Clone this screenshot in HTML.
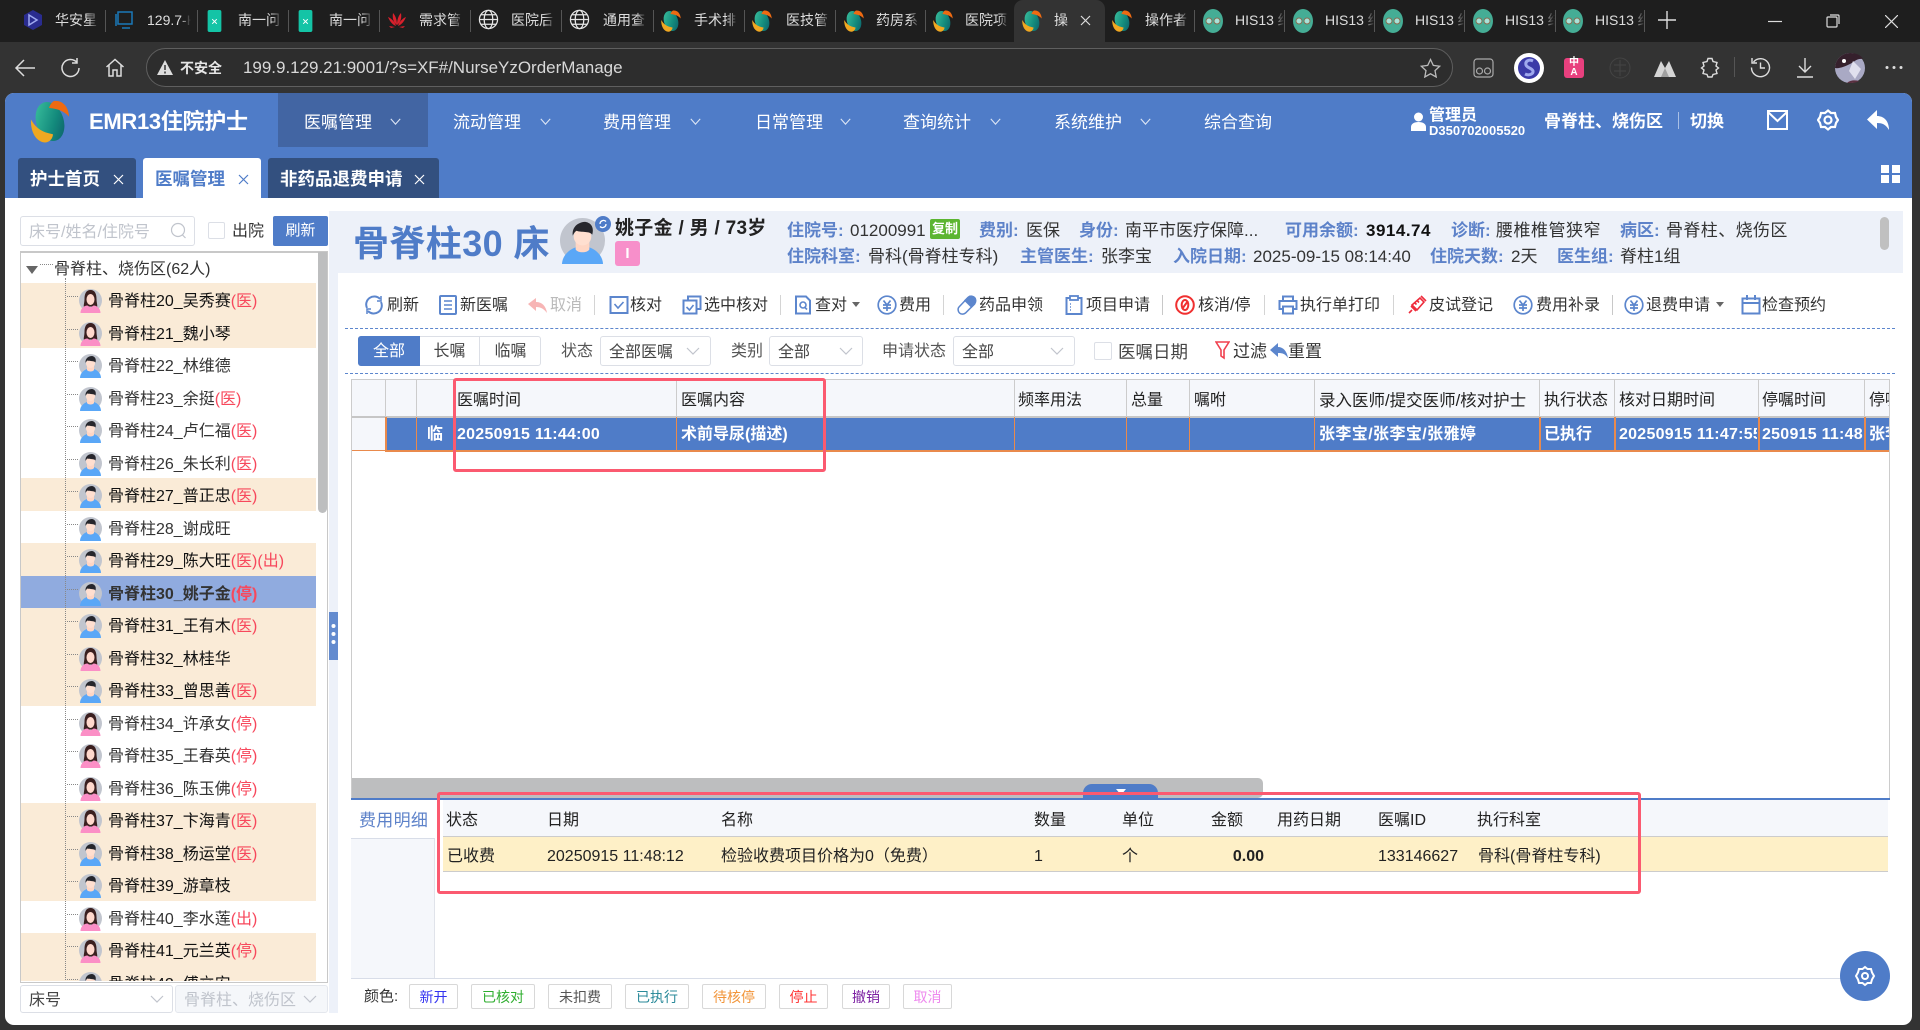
<!DOCTYPE html>
<html lang="zh"><head><meta charset="utf-8"><title>EMR13住院护士</title>
<style>
*{box-sizing:border-box}
html,body{margin:0;padding:0;width:1920px;height:1030px;overflow:hidden;background:#333;font-family:"Liberation Sans","Noto Sans CJK SC",sans-serif;font-size:16px;color:#333}
.a{position:absolute}
.t{position:absolute;white-space:nowrap;height:24px;line-height:24px;margin-top:1px}
.b{font-weight:700}
.w{color:#fff}
.lb{color:#5d82c9;font-weight:700;font-size:17px}
.v{font-size:17px}
.tt{position:absolute;top:8px;height:24px;line-height:24px;font-size:14px;color:#ddd;white-space:nowrap;overflow:hidden;width:44px;-webkit-mask-image:linear-gradient(90deg,#000 75%,transparent)}
.sp{position:absolute;top:10px;width:1px;height:22px;background:#555}
.nav{position:absolute;top:111px;height:24px;line-height:24px;font-size:17px;color:#fff;white-space:nowrap}
.tab{position:absolute;top:158px;height:40px;background:#33507f;border-radius:3px 3px 0 0;color:#fff;font-weight:700;font-size:17.5px;line-height:42px;white-space:nowrap}
.tool{position:absolute;top:294px;height:24px;line-height:24px;font-size:16px;color:#333;white-space:nowrap}
.sep{position:absolute;top:295px;width:1px;height:20px;background:#d4d4d4}
.ic{position:absolute;top:295px;width:20px;height:20px;fill:none;stroke:#5c86cd;stroke-width:1.6}
.sel{position:absolute;top:336px;height:30px;border:1px solid #dcdfe6;border-radius:3px;background:#fff;line-height:30px;padding-left:8px;font-size:16px;white-space:nowrap;color:#444}
.ch{position:absolute;width:14px;height:8px;fill:none;stroke:#c0c4cc;stroke-width:1.2}
.cn{position:absolute;top:118px;width:11px;height:7px;fill:none;stroke:#dde6f5;stroke-width:1.4}
.th{position:absolute;top:389px;height:24px;line-height:24px;font-size:16px;white-space:nowrap;color:#222}
.tv{position:absolute;top:423px;height:24px;line-height:24px;font-size:16px;font-weight:700;color:#fff;white-space:nowrap;overflow:hidden}
.vl{position:absolute;top:379px;width:1px;height:38px;background:#ccc}
.ol{position:absolute;top:417px;width:2px;height:34px;background:#e98a4c}
.bh{position:absolute;top:809px;height:24px;line-height:24px;font-size:16px;white-space:nowrap;color:#222}
.bv{position:absolute;top:845px;height:24px;line-height:24px;font-size:16px;white-space:nowrap;color:#222}
.lg{position:absolute;top:984px;height:25px;line-height:25px;border:1px solid #d8d8d8;border-radius:2px;background:#fff;text-align:center;font-size:14px}
.red{position:absolute;border:3px solid #fb5a70;border-radius:3px;pointer-events:none}
#tree{position:absolute;left:21px;top:252px;width:306px;height:729px;overflow:hidden;padding-top:31px}
.r{position:relative;height:32.5px;width:295px;font-size:16px;line-height:37px;padding-left:87px;white-space:nowrap;color:#333}
.r.o{background:#faebd7;color:#111}
.r.s{background:#90abdf;font-weight:700;color:#333}
.r svg{position:absolute;left:58px;top:6px;width:23px;height:24px}
.r i{position:absolute;left:46px;top:13px;width:11px;border-top:1px dotted #888}
.r em{font-style:normal;color:#f7485c}
</style></head><body>
<svg width="0" height="0" style="position:absolute">
<defs>
<linearGradient id="g" x1="0" y1="0" x2="1" y2="1"><stop offset="0" stop-color="#3dc4a0"/><stop offset=".6" stop-color="#138a7c"/><stop offset="1" stop-color="#0c5a68"/></linearGradient>
<symbol id="logo" viewBox="0 0 40 44"><ellipse cx="20" cy="22" rx="14" ry="20.500" fill="url(#g)" transform="rotate(-18 20 22)"/><path d="M24 1C33 0 39 7 39.500 17 35 12 29 9 19 8 20 5 22 2 24 1Z" fill="#ee6a12"/><path d="M.5 20C5 28 11 33 23 35 23 39 20 43 15 43.500 6 43 0 33 .5 20Z" fill="#f0a821"/></symbol>
<symbol id="m" viewBox="0 0 23 24"><circle cx="11.5" cy="11.5" r="11.5" fill="#c1c5ce"/><path d="M1 24c0-5 4-8 7-9h7c3 1 7 4 7 9Z" fill="#5aa7f7"/><path d="M8 12h7v4c-1 2-6 2-7 0Z" fill="#ffd6c4"/><circle cx="11.5" cy="9.5" r="4.5" fill="#ffdfd0"/><path d="M6.500 9C6 4 10 2 13 2c3 .5 4.500 3 3.500 6.500C15 6.500 11 7.500 8.500 6.500 7.500 7 7 8 6.500 9Z" fill="#26262c"/></symbol>
<symbol id="f" viewBox="0 0 23 24"><circle cx="11.500" cy="11.500" r="11.500" fill="#c1c5ce"/><path d="M11.500 1C7 1 5.500 5 5.500 10c0 3-.8 5-.8 7.500h13.600c0-2.500-.8-4.500-.8-7.500 0-5-1.500-9-6-9Z" fill="#3a1f1f"/><ellipse cx="11.500" cy="10.500" rx="4" ry="5.500" fill="#ffd8cc"/><path d="M1.500 24c0-4 3-7.500 7-7.500l3 2 3-2c4 0 7 3.500 7 7.500Z" fill="#fb8fc6"/></symbol>
<symbol id="fav" viewBox="0 0 40 44"><ellipse cx="20" cy="22" rx="14" ry="20.500" fill="url(#g)" transform="rotate(-18 20 22)"/><path d="M24 1C33 0 39 7 39.500 17 35 12 29 9 19 8 20 5 22 2 24 1Z" fill="#ee6a12"/><path d="M.5 20C5 28 11 33 23 35 23 39 20 43 15 43.500 6 43 0 33 .5 20Z" fill="#f0a821"/></symbol>
<symbol id="his" viewBox="0 0 20 24"><ellipse cx="10" cy="12" rx="10" ry="12" fill="#45ad95"/><circle cx="6" cy="12" r="3" fill="#a7e3d8" stroke="#8a6a50" stroke-width=".9"/><circle cx="14" cy="12" r="3" fill="#a7e3d8" stroke="#8a6a50" stroke-width=".9"/></symbol>
<symbol id="globe" viewBox="0 0 22 22"><g fill="none" stroke="#e6e6e6" stroke-width="1.300"><circle cx="11" cy="11" r="9.500"/><ellipse cx="11" cy="11" rx="4.500" ry="9.500"/><path d="M1.500 11h19M3 6h16M3 16h16"/></g></symbol>
<symbol id="qi" viewBox="0 0 15 24"><rect width="15" height="24" rx="2" fill="#14c4a6"/><path d="M5 10l5 5M10 10l-5 5" stroke="#fff"/></symbol>
<symbol id="yen" viewBox="0 0 20 20"><circle cx="10" cy="10" r="8.800"/><path d="M6.500 5.500 10 10l3.500-4.500M6 10h8M6 13h8M10 10v6"/></symbol>
<symbol id="chev" viewBox="0 0 14 8"><path d="M1 1l6 6 6-6"/></symbol>
</defs></svg>

<!-- browser tab strip -->
<div class="a" style="left:0;top:0;width:1920px;height:42px;background:#1e1e1e"></div>
<div class="a" style="left:1014px;top:0;width:91px;height:42px;background:#333;border-radius:9px 9px 0 0"></div>
<svg class="a" style="left:23px;top:10px" width="20" height="20" viewBox="0 0 20 20"><path d="M10 0 19 5v10l-9 5-9-5V5Z" fill="#2a2c8f"/><path d="M6 5l8 5-8 5Z" fill="none" stroke="#9ea8f0" stroke-width="1.500"/></svg>
<svg class="a" style="left:114px;top:10px" width="20" height="20" viewBox="0 0 20 20" fill="none" stroke="#1a78b8" stroke-width="1.500"><rect x="4" y="2" width="14" height="12"/><path d="M2 4v12M8 18h8"/></svg>
<svg class="a" style="left:207px;top:10px" width="15" height="22"><use href="#qi"/></svg>
<svg class="a" style="left:298px;top:10px" width="15" height="22"><use href="#qi"/></svg>
<svg class="a" style="left:387px;top:10px" width="20" height="20" viewBox="0 0 20 20"><path d="M10 15C7 13 5 9 6 3c2 2 4 6 4 12ZM10 15c3-2 5-6 4-12-2 2-4 6-4 12ZM9 16C6 15 3 12 1 7c3 1 7 5 8 9ZM11 16c3-1 6-4 8-9-3 1-7 5-8 9ZM8 17l-6-1 2 2ZM12 17l6-1-2 2Z" fill="#d9202c"/></svg>
<svg class="a" style="left:478px;top:9px" width="21" height="21"><use href="#globe"/></svg>
<svg class="a" style="left:569px;top:9px" width="21" height="21"><use href="#globe"/></svg>
<svg class="a" style="left:661px;top:9px" width="20" height="24"><use href="#fav"/></svg>
<svg class="a" style="left:752px;top:9px" width="20" height="24"><use href="#fav"/></svg>
<svg class="a" style="left:844px;top:9px" width="20" height="24"><use href="#fav"/></svg>
<svg class="a" style="left:933px;top:9px" width="20" height="24"><use href="#fav"/></svg>
<svg class="a" style="left:1022px;top:9px" width="20" height="24"><use href="#fav"/></svg>
<svg class="a" style="left:1112px;top:9px" width="20" height="24"><use href="#fav"/></svg>
<svg class="a" style="left:1203px;top:9px" width="20" height="24"><use href="#his"/></svg>
<svg class="a" style="left:1293px;top:9px" width="20" height="24"><use href="#his"/></svg>
<svg class="a" style="left:1383px;top:9px" width="20" height="24"><use href="#his"/></svg>
<svg class="a" style="left:1473px;top:9px" width="20" height="24"><use href="#his"/></svg>
<svg class="a" style="left:1563px;top:9px" width="20" height="24"><use href="#his"/></svg>
<div class="tt" style="left:55px">华安星</div><div class="tt" style="left:147px">129.7-H</div><div class="tt" style="left:238px">南一问</div><div class="tt" style="left:329px">南一问</div><div class="tt" style="left:419px">需求管</div><div class="tt" style="left:511px">医院后</div><div class="tt" style="left:603px">通用查</div><div class="tt" style="left:694px">手术排</div><div class="tt" style="left:786px">医技管</div><div class="tt" style="left:876px">药房系</div><div class="tt" style="left:965px">医院项</div><div class="tt" style="left:1054px;width:16px;-webkit-mask-image:none">操</div><div class="tt" style="left:1145px">操作者</div><div class="tt" style="left:1235px;width:50px">HIS13 结</div><div class="tt" style="left:1325px;width:50px">HIS13 结</div><div class="tt" style="left:1415px;width:50px">HIS13 结</div><div class="tt" style="left:1505px;width:50px">HIS13 结</div><div class="tt" style="left:1595px;width:50px">HIS13 结</div>
<div class="sp" style="left:105px"></div><div class="sp" style="left:197px"></div><div class="sp" style="left:288px"></div><div class="sp" style="left:379px"></div><div class="sp" style="left:470px"></div><div class="sp" style="left:561px"></div><div class="sp" style="left:653px"></div><div class="sp" style="left:744px"></div><div class="sp" style="left:835px"></div><div class="sp" style="left:925px"></div><div class="sp" style="left:1194px"></div><div class="sp" style="left:1284px"></div><div class="sp" style="left:1374px"></div><div class="sp" style="left:1464px"></div><div class="sp" style="left:1555px"></div><div class="sp" style="left:1644px"></div>
<svg class="a" style="left:1080px;top:15px" width="11" height="11" stroke="#ddd" stroke-width="1.200"><path d="M1 1l9 9M10 1l-9 9"/></svg>
<svg class="a" style="left:1658px;top:11px" width="18" height="18" stroke="#ddd" stroke-width="1.400"><path d="M9 0v18M0 9h18"/></svg>
<svg class="a" style="left:1768px;top:15px" width="14" height="12" stroke="#ddd" stroke-width="1.200"><path d="M0 6.500h14"/></svg>
<svg class="a" style="left:1826px;top:14px" width="14" height="14" fill="none" stroke="#ddd" stroke-width="1.200"><rect x="1" y="3" width="10" height="10" rx="1"/><path d="M4 1h8a1 1 0 0 1 1 1v8"/></svg>
<svg class="a" style="left:1885px;top:15px" width="13" height="13" stroke="#ddd" stroke-width="1.200"><path d="M0 0l13 13M13 0 0 13"/></svg>

<!-- browser toolbar -->
<div class="a" style="left:0;top:42px;width:1920px;height:51px;background:#333"></div>
<svg class="a" style="left:14px;top:58px" width="22" height="20" fill="none" stroke="#ddd" stroke-width="1.500"><path d="M21 10H2M10 2l-8 8 8 8"/></svg>
<svg class="a" style="left:60px;top:57px" width="21" height="21" fill="none" stroke="#ddd" stroke-width="1.500"><path d="M17 5.500A8.500 8.500 0 1 0 19 11M17 1v5h-5"/></svg>
<svg class="a" style="left:105px;top:58px" width="20" height="20" fill="none" stroke="#ddd" stroke-width="1.500"><path d="M1.500 9 10 1.500 18.500 9M4 7v11h4v-6h4v6h4V7"/></svg>
<div class="a" style="left:146px;top:48px;width:1307px;height:39px;border:1px solid #5f5f5f;border-radius:20px;background:#2d2d2d"></div>
<svg class="a" style="left:157px;top:60px" width="16" height="15"><path d="M8 0l8 15H0Z" fill="#ddd"/><path d="M8 5v5M8 11.500v2" stroke="#333" stroke-width="1.500"/></svg>
<div class="t" style="left:180px;top:56px;margin-top:0;font-size:14px;color:#e6e6e6;font-weight:700">不安全</div>
<div class="t" style="left:243px;top:56px;margin-top:0;font-size:17px;color:#d8d8d8;letter-spacing:-.02px">199.9.129.21:9001/?s=XF#/NurseYzOrderManage</div>
<svg class="a" style="left:1420px;top:58px" width="21" height="20" fill="none" stroke="#bbb" stroke-width="1.300"><path d="M10.500 1.500l2.800 5.900 6.400.8-4.700 4.400 1.200 6.400-5.700-3.200-5.700 3.200 1.200-6.400L1.300 8.200l6.400-.8Z"/></svg>
<svg class="a" style="left:1473px;top:58px" width="21" height="20" fill="none" stroke="#aaa" stroke-width="1.200"><rect x="1" y="1" width="19" height="18" rx="3"/><circle cx="6.500" cy="13" r="3"/><circle cx="14.500" cy="13" r="3"/></svg>
<svg class="a" style="left:1514px;top:53px" width="30" height="30" viewBox="0 0 30 30"><circle cx="15" cy="15" r="15" fill="#fff"/><circle cx="15" cy="15" r="11" fill="#3b3aa8"/><path d="M19 8c-4-2-8 0-7 4 1 3 6 3 7 6 .5 3-4 5-8 3" fill="none" stroke="#9fa8ee" stroke-width="3"/></svg>
<div class="a" style="left:1564px;top:58px;width:20px;height:20px;background:#e8407e;border-radius:3px;color:#fff;font-size:10px;line-height:10px;text-align:center;font-weight:700;padding-top:0">中<br>A</div>
<svg class="a" style="left:1609px;top:57px" width="22" height="22" fill="none" stroke="#444"><circle cx="11" cy="11" r="10"/><path d="M11 3v16M5 8h12M5 14h12"/></svg>
<svg class="a" style="left:1654px;top:59px" width="22" height="18"><path d="M0 18 7 2l4 7 4-7 7 16Z" fill="#d5d5d5"/><path d="M7 18 11 9l4 9Z" fill="#a0a0a0"/></svg>
<svg class="a" style="left:1700px;top:57px" width="20" height="21" fill="none" stroke="#ddd" stroke-width="1.400"><path d="M8 1.500h4l1 3 4 1-1 3.500 2.500 2-2.500 2 1 3.500-4 1-1 2.500H8l-1-2.500-4-1 1-3.500-2.500-2L4 9 3 5.500l4-1Z"/></svg>
<div class="a" style="left:1734px;top:57px;width:1px;height:20px;background:#555"></div>
<svg class="a" style="left:1750px;top:57px" width="21" height="21" fill="none" stroke="#ddd" stroke-width="1.400"><path d="M3.500 5A9 9 0 1 1 1.500 10.500M2 1v5h5M10.500 5.500V11h4.500"/></svg>
<svg class="a" style="left:1796px;top:58px" width="18" height="20" fill="none" stroke="#ddd" stroke-width="1.400"><path d="M9 0v14M3 8l6 6 6-6M1 19h16"/></svg>
<svg class="a" style="left:1835px;top:53px" width="30" height="30" viewBox="0 0 30 30"><circle cx="15" cy="15" r="15" fill="#a9a9c4"/><path d="M0 15A15 15 0 0 1 15 0c6 0 11 2 13 6-6-1-9 3-13 5S4 16 0 15Z" fill="#35202c"/><path d="M18 8l8 8-6 10-6-8Z" fill="#e0e0ee"/><path d="M12 30c3-3 8-3 12-2-3 2-6 2-12 2Z" fill="#5a3040"/><circle cx="9" cy="8" r="2" fill="#fff"/></svg>
<svg class="a" style="left:1884px;top:65px" width="20" height="5" fill="#ddd"><circle cx="3" cy="2.500" r="1.500"/><circle cx="10" cy="2.500" r="1.500"/><circle cx="17" cy="2.500" r="1.500"/></svg>

<!-- app -->
<div class="a" style="left:5px;top:93px;width:1907px;height:932px;background:#fff;border-radius:9px;overflow:hidden">
 <div class="a" style="left:0;top:0;width:1907px;height:105px;background:#4f7cc8"></div>
</div>
<div class="a" style="left:278px;top:93px;width:150px;height:54px;background:#4265a3"></div>
<svg class="a" style="left:30px;top:100px" width="40" height="43"><use href="#logo"/></svg>
<div class="t b w" style="left:89px;top:109px;font-size:22px;letter-spacing:-.3px">EMR13住院护士</div>
<div class="nav" style="left:304px">医嘱管理</div><div class="nav" style="left:453px">流动管理</div><div class="nav" style="left:603px">费用管理</div><div class="nav" style="left:755px">日常管理</div><div class="nav" style="left:903px">查询统计</div><div class="nav" style="left:1054px">系统维护</div><div class="nav" style="left:1204px">综合查询</div>
<svg class="cn" style="left:390px" viewBox="0 0 14 8" preserveAspectRatio="none"><path d="M1 1l6 6 6-6"/></svg><svg class="cn" style="left:540px" viewBox="0 0 14 8" preserveAspectRatio="none"><path d="M1 1l6 6 6-6"/></svg><svg class="cn" style="left:690px" viewBox="0 0 14 8" preserveAspectRatio="none"><path d="M1 1l6 6 6-6"/></svg><svg class="cn" style="left:840px" viewBox="0 0 14 8" preserveAspectRatio="none"><path d="M1 1l6 6 6-6"/></svg><svg class="cn" style="left:990px" viewBox="0 0 14 8" preserveAspectRatio="none"><path d="M1 1l6 6 6-6"/></svg><svg class="cn" style="left:1140px" viewBox="0 0 14 8" preserveAspectRatio="none"><path d="M1 1l6 6 6-6"/></svg>
<svg class="a" style="left:1411px;top:112px" width="15" height="19" fill="#fff"><circle cx="7.500" cy="5" r="4.500"/><path d="M0 19v-4c0-3 3-5 7.500-5S15 12 15 15v4Z"/></svg>
<div class="t b w" style="left:1429px;top:103px;font-size:16px">管理员</div>
<div class="t b w" style="left:1429px;top:118px;font-size:13px">D350702005520</div>
<div class="t b w" style="left:1544px;top:109px;font-size:17px">骨脊柱、烧伤区</div>
<div class="a" style="left:1678px;top:112px;width:1px;height:17px;background:#a9c0e6"></div>
<div class="t b w" style="left:1690px;top:109px;font-size:17px">切换</div>
<svg class="a" style="left:1767px;top:110px" width="21" height="20" fill="none" stroke="#fff" stroke-width="2"><rect x="1" y="1" width="19" height="18"/><path d="M1 2l9.500 9L20 2"/></svg>
<svg class="a" style="left:1817px;top:109px" width="22" height="22" fill="none" stroke="#fff" stroke-width="2.200"><path d="M11 1.500l3 2.500 4 0 1 4 2 3-2 3-1 4-4 0-3 2.500-3-2.500-4 0-1-4-2-3 2-3 1-4 4 0Z"/><circle cx="11" cy="11" r="3.500"/></svg>
<svg class="a" style="left:1867px;top:110px" width="22" height="20" fill="#fff"><path d="M10 0v6c7 0 12 5 12 14-3-5-6-7-12-7v6L0 9.500Z"/></svg>

<div class="tab" style="left:18px;width:118px;padding-left:12px">护士首页</div>
<div class="tab" style="left:143px;width:118px;padding-left:12px;background:#fff;color:#4f7cc8">医嘱管理</div>
<div class="tab" style="left:268px;width:171px;padding-left:12px">非药品退费申请</div>
<svg class="a" style="left:113px;top:174px" width="11" height="11" stroke="#fff" stroke-width="1.200"><path d="M1 1l9 9M10 1l-9 9"/></svg>
<svg class="a" style="left:238px;top:174px" width="11" height="11" stroke="#4f7cc8" stroke-width="1.200"><path d="M1 1l9 9M10 1l-9 9"/></svg>
<svg class="a" style="left:414px;top:174px" width="11" height="11" stroke="#fff" stroke-width="1.200"><path d="M1 1l9 9M10 1l-9 9"/></svg>
<svg class="a" style="left:1881px;top:165px" width="19" height="18" fill="#fff"><rect width="8" height="8"/><rect x="11" width="8" height="8"/><rect y="10" width="8" height="8"/><rect x="11" y="10" width="8" height="8"/></svg>

<!-- sidebar -->
<div class="a" style="left:20px;top:216px;width:175px;height:30px;border:1px solid #dcdfe6;border-radius:3px;background:#fff;color:#c0c4cc;font-size:16px;line-height:31px;padding-left:8px;white-space:nowrap">床号/姓名/住院号</div>
<svg class="a" style="left:170px;top:222px" width="17" height="18" fill="none" stroke="#c0c4cc" stroke-width="1.200"><circle cx="8" cy="8" r="6.500"/><path d="M12.500 13l3 3"/></svg>
<div class="a" style="left:208px;top:222px;width:17px;height:17px;border:1px solid #dcdfe6;border-radius:2px"></div>
<div class="t" style="left:232px;top:219px">出院</div>
<div class="a w" style="left:273px;top:216px;width:55px;height:30px;background:#4f7cc8;border-radius:2px;text-align:center;line-height:29px;font-size:15px">刷新</div>
<div class="a" style="left:20px;top:251px;width:308px;height:732px;border:1px solid #c8c8c8;border-top-width:2px"></div>
<div id="tree">
<div class="r o"><i></i><svg><use href="#f"/></svg>骨脊柱20_吴秀赛<em>(医)</em></div>
<div class="r o"><i></i><svg><use href="#f"/></svg>骨脊柱21_魏小琴</div>
<div class="r"><i></i><svg><use href="#m"/></svg>骨脊柱22_林维德</div>
<div class="r"><i></i><svg><use href="#m"/></svg>骨脊柱23_余挺<em>(医)</em></div>
<div class="r"><i></i><svg><use href="#m"/></svg>骨脊柱24_卢仁福<em>(医)</em></div>
<div class="r"><i></i><svg><use href="#m"/></svg>骨脊柱26_朱长利<em>(医)</em></div>
<div class="r o"><i></i><svg><use href="#m"/></svg>骨脊柱27_普正忠<em>(医)</em></div>
<div class="r"><i></i><svg><use href="#m"/></svg>骨脊柱28_谢成旺</div>
<div class="r o"><i></i><svg><use href="#m"/></svg>骨脊柱29_陈大旺<em>(医)(出)</em></div>
<div class="r s"><i></i><svg><use href="#m"/></svg>骨脊柱30_姚子金<em>(停)</em></div>
<div class="r o"><i></i><svg><use href="#m"/></svg>骨脊柱31_王有木<em>(医)</em></div>
<div class="r o"><i></i><svg><use href="#f"/></svg>骨脊柱32_林桂华</div>
<div class="r o"><i></i><svg><use href="#m"/></svg>骨脊柱33_曾思善<em>(医)</em></div>
<div class="r"><i></i><svg><use href="#f"/></svg>骨脊柱34_许承女<em>(停)</em></div>
<div class="r"><i></i><svg><use href="#f"/></svg>骨脊柱35_王春英<em>(停)</em></div>
<div class="r"><i></i><svg><use href="#f"/></svg>骨脊柱36_陈玉佛<em>(停)</em></div>
<div class="r o"><i></i><svg><use href="#f"/></svg>骨脊柱37_卞海青<em>(医)</em></div>
<div class="r o"><i></i><svg><use href="#m"/></svg>骨脊柱38_杨运堂<em>(医)</em></div>
<div class="r o"><i></i><svg><use href="#m"/></svg>骨脊柱39_游章枝</div>
<div class="r"><i></i><svg><use href="#f"/></svg>骨脊柱40_李水莲<em>(出)</em></div>
<div class="r o"><i></i><svg><use href="#f"/></svg>骨脊柱41_元兰英<em>(停)</em></div>
<div class="r o"><i></i><svg><use href="#m"/></svg>骨脊柱42_傅立安</div>
<div class="a" style="left:44px;top:26px;height:710px;border-left:1px dotted #888"></div>
<div class="a" style="left:5px;top:14px;width:0;height:0;border:6.500px solid transparent;border-top:8px solid #666;border-bottom:0"></div>
<div class="a" style="left:19px;top:12px;width:13px;border-top:1px dotted #888"></div>
<div class="t" style="left:33px;top:5px">骨脊柱、烧伤区(62人)</div>
<div class="a" style="left:297px;top:0;width:9px;height:261px;background:#bdbebf;border-radius:0 0 5px 5px"></div>
</div>
<div class="a" style="left:20px;top:985px;width:153px;height:28px;border:1px solid #dcdfe6;border-radius:3px;line-height:29px;padding-left:8px;color:#444;background:#fff">床号</div>
<div class="a" style="left:175px;top:985px;width:153px;height:28px;border:1px solid #e4e7ed;border-radius:3px;line-height:29px;padding-left:8px;color:#c0c4cc;background:#f5f7fa;white-space:nowrap;overflow:hidden">骨脊柱、烧伤区</div>
<svg class="ch" style="left:150px;top:995px"><use href="#chev"/></svg><svg class="ch" style="left:303px;top:995px;background:#f5f7fa"><use href="#chev"/></svg>
<div class="a" style="left:329px;top:211px;width:9px;height:802px;background:#edf1f9"></div>
<div class="a" style="left:329px;top:612px;width:9px;height:48px;background:#638bcf"></div>
<svg class="a" style="left:329px;top:622px" width="9" height="30" fill="#fff"><circle cx="4.500" cy="4" r="2"/><circle cx="4.500" cy="12" r="2"/><circle cx="4.500" cy="20" r="2"/></svg>

<!-- patient header -->
<div class="a" style="left:338px;top:211px;width:1565px;height:62px;background:#edf1f9"></div>
<div class="t b" style="left:353px;top:220px;height:46px;line-height:46px;font-size:36px;color:#4f7cc8;letter-spacing:.4px">骨脊柱30 床</div>
<svg class="a" style="left:560px;top:218px" width="45" height="46" viewBox="0 0 23 23.500"><use href="#m" width="23" height="24"/></svg>
<svg class="a" style="left:595px;top:216px" width="16" height="16"><circle cx="8" cy="8" r="8" fill="#4f7cc8"/><path d="M5 8a3.500 3.500 0 0 1 6-2.500M11 8a3.500 3.500 0 0 1-6 2.500" fill="none" stroke="#fff" stroke-width="1.300"/></svg>
<div class="t b" style="left:615px;top:216px;font-size:19px;color:#222;letter-spacing:.3px">姚子金 / 男 / 73岁</div>
<div class="a w b" style="left:615px;top:241px;width:25px;height:25px;background:#f78fca;border-radius:3px;text-align:center;line-height:25px;font-size:15px">I</div>
<div class="t lb" style="left:787px;top:218px">住院号:</div><div class="t v" style="left:850px;top:218px">01200991</div>
<div class="a w b" style="left:930px;top:219px;width:30px;height:20px;background:#5cb531;border-radius:2px;text-align:center;line-height:20px;font-size:13px">复制</div>
<div class="t lb" style="left:979px;top:218px">费别:</div><div class="t v" style="left:1026px;top:218px">医保</div>
<div class="t lb" style="left:1079px;top:218px">身份:</div><div class="t v" style="left:1125px;top:218px">南平市医疗保障...</div>
<div class="t lb" style="left:1285px;top:218px">可用余额:</div><div class="t b v" style="left:1366px;top:218px;color:#111;letter-spacing:.5px">3914.74</div>
<div class="t lb" style="left:1451px;top:218px">诊断:</div><div class="t v" style="left:1496px;top:218px;letter-spacing:.5px">腰椎椎管狭窄</div>
<div class="t lb" style="left:1620px;top:218px">病区:</div><div class="t v" style="left:1666px;top:218px;letter-spacing:.4px">骨脊柱、烧伤区</div>
<div class="t lb" style="left:787px;top:244px">住院科室:</div><div class="t v" style="left:868px;top:244px">骨科(骨脊柱专科)</div>
<div class="t lb" style="left:1020px;top:244px">主管医生:</div><div class="t v" style="left:1101px;top:244px">张李宝</div>
<div class="t lb" style="left:1173px;top:244px">入院日期:</div><div class="t v" style="left:1253px;top:244px">2025-09-15 08:14:40</div>
<div class="t lb" style="left:1430px;top:244px">住院天数:</div><div class="t v" style="left:1511px;top:244px">2天</div>
<div class="t lb" style="left:1557px;top:244px">医生组:</div><div class="t v" style="left:1620px;top:244px">脊柱1组</div>
<div class="a" style="left:1880px;top:217px;width:9px;height:33px;background:#c0c0c0;border-radius:5px"></div>

<!-- toolbar -->
<svg class="ic" style="left:364px" viewBox="0 0 20 20"><path d="M3 13A8 8 0 0 1 16 4M17 7a8 8 0 0 1-13 9" stroke-width="2"/><path d="M17 1v5h-4M3 19v-5h4" stroke-width="1.500"/></svg><div class="tool" style="left:387px">刷新</div>
<svg class="ic" style="left:438px" viewBox="0 0 20 20"><rect x="2" y="1" width="16" height="18" rx="1" stroke-width="2"/><path d="M6 6h8M6 10h8M6 14h8"/></svg><div class="tool" style="left:460px">新医嘱</div>
<svg class="ic" style="left:528px;stroke:none;fill:#f7b5b5" viewBox="0 0 20 20"><path d="M8 3v4c6 0 10 4 11 11-3-4-6-6-11-6v4L0 9Z"/></svg><div class="tool" style="left:550px;color:#bbb">取消</div>
<div class="sep" style="left:594px"></div>
<svg class="ic" style="left:609px" viewBox="0 0 20 20"><rect x="1.500" y="2" width="17" height="16" stroke-width="2"/><path d="M5.500 9l3.500 4 5.500-6"/></svg><div class="tool" style="left:630px">核对</div>
<svg class="ic" style="left:682px" viewBox="0 0 20 20"><path d="M6 5V1.500h12.500V14H15" stroke-width="2"/><rect x="1.500" y="5.500" width="13" height="13" stroke-width="2"/><path d="M4.500 12l3 3 4-5"/></svg><div class="tool" style="left:704px">选中核对</div>
<div class="sep" style="left:780px"></div>
<svg class="ic" style="left:793px" viewBox="0 0 20 20"><path d="M3 1.500h10l4 4v13H3Z" stroke-width="2"/><circle cx="10" cy="10" r="3"/><path d="M12 12.500l2 2"/></svg><div class="tool" style="left:815px">查对</div>
<div class="a" style="left:852px;top:302px;border:4px solid transparent;border-top:5px solid #666;border-bottom:0"></div>
<svg class="ic" style="left:877px;stroke-width:1.700" viewBox="0 0 20 20"><use href="#yen"/></svg><div class="tool" style="left:899px">费用</div>
<div class="sep" style="left:943px"></div>
<svg class="ic" style="left:957px;stroke-width:1.500" viewBox="0 0 20 20"><path d="M2 12 11 2.500c2-2 5-1.500 6.500 0s1.500 4.500 0 6.500L8.500 18c-2 1.500-4.500 1.500-6 0s-2-4.500-.5-6Z"/><path d="M11 2.500c2-2 5-1.500 6.500 0s1.500 4.500 0 6.500l-3 3-6.500-6.500Z" fill="#5c86cd"/></svg><div class="tool" style="left:979px">药品申领</div>
<svg class="ic" style="left:1064px" viewBox="0 0 20 20"><path d="M6 3H2.500v16h15V3H14" stroke-width="2"/><rect x="6" y="1" width="8" height="4" stroke-width="1.800"/><path d="M6 9h1M6 12h1M6 15h1" stroke-width="1.500"/></svg><div class="tool" style="left:1086px">项目申请</div>
<div class="sep" style="left:1162px;background:#c8c8c8"></div>
<svg class="ic" style="left:1175px;stroke:#f03030;stroke-width:2" viewBox="0 0 20 20"><circle cx="10" cy="10" r="8.800"/><ellipse cx="10" cy="10" rx="3.300" ry="5"/><path d="M7 14l6-8"/></svg><div class="tool" style="left:1198px">核消/停</div>
<div class="sep" style="left:1264px"></div>
<svg class="ic" style="left:1278px" viewBox="0 0 20 20"><path d="M5 6V1.500h10V6M5 14H1.500V6h17v8H15" stroke-width="2"/><rect x="5" y="11.500" width="10" height="7" stroke-width="2"/></svg><div class="tool" style="left:1300px">执行单打印</div>
<div class="sep" style="left:1393px"></div>
<svg class="ic" style="left:1407px;stroke:#ee2c3c" viewBox="0 0 20 20"><path d="M2 18l3-3M4 11l5 5M5 10 13 3l4 4-7 8ZM14 1l5 5M8 8l1.500 1.500M10.500 6 12 7.500"/></svg><div class="tool" style="left:1429px">皮试登记</div>
<svg class="ic" style="left:1513px;stroke-width:1.700" viewBox="0 0 20 20"><use href="#yen"/></svg><div class="tool" style="left:1536px">费用补录</div>
<div class="sep" style="left:1612px;background:#c8c8c8"></div>
<svg class="ic" style="left:1624px;stroke-width:1.700" viewBox="0 0 20 20"><use href="#yen"/></svg><div class="tool" style="left:1646px">退费申请</div>
<div class="a" style="left:1716px;top:302px;border:4px solid transparent;border-top:5px solid #666;border-bottom:0"></div>
<svg class="ic" style="left:1741px" viewBox="0 0 20 20"><rect x="1.500" y="3.500" width="17" height="15" stroke-width="2"/><path d="M1.500 8h17M6 0v5M14 0v5" stroke-width="2"/></svg><div class="tool" style="left:1762px">检查预约</div>
<div class="a" style="left:345px;top:328px;width:1550px;border-top:1px dashed #5c86cd"></div>

<!-- filter row -->
<div class="a" style="left:358px;top:336px;width:183px;height:30px;border:1px solid #dcdfe6;border-radius:3px"></div>
<div class="a w" style="left:358px;top:336px;width:62px;height:30px;background:#4f7cc8;border-radius:3px 0 0 3px;text-align:center;line-height:32px">全部</div>
<div class="a" style="left:420px;top:336px;width:60px;height:30px;text-align:center;line-height:32px;border-right:1px solid #dcdfe6;color:#444">长嘱</div>
<div class="a" style="left:480px;top:336px;width:61px;height:30px;text-align:center;line-height:32px;color:#444">临嘱</div>
<div class="t" style="left:561px;top:339px;color:#555">状态</div>
<div class="sel" style="left:600px;width:111px;line-height:31px">全部医嘱</div><svg class="ch" style="left:686px;top:347px"><use href="#chev"/></svg>
<div class="t" style="left:731px;top:339px;color:#555">类别</div>
<div class="sel" style="left:769px;width:94px;line-height:31px">全部</div><svg class="ch" style="left:839px;top:347px"><use href="#chev"/></svg>
<div class="t" style="left:882px;top:339px;color:#555">申请状态</div>
<div class="sel" style="left:953px;width:122px;line-height:31px">全部</div><svg class="ch" style="left:1050px;top:347px"><use href="#chev"/></svg>
<div class="a" style="left:1094px;top:342px;width:18px;height:18px;border:1px solid #dcdfe6;border-radius:2px"></div>
<div class="t" style="left:1118px;top:339px;color:#444;font-size:17.5px">医嘱日期</div>
<svg class="a" style="left:1215px;top:341px" width="15" height="19" fill="none" stroke="#f0404f" stroke-width="1.600"><path d="M1 1h13L9 9v8l-3-2V9Z"/></svg>
<div class="t" style="left:1233px;top:339px;font-size:17px">过滤</div>
<svg class="a" style="left:1270px;top:342px" width="18" height="17" fill="#5c86cd"><path d="M8 1v4c5 0 9 4 10 11-3-4-5-5-10-5v4L0 8Z"/></svg>
<div class="t" style="left:1288px;top:339px;font-size:17px">重置</div>
<div class="a" style="left:345px;top:373px;width:1550px;border-top:1px dashed #5c86cd"></div>

<!-- main table -->
<div class="a" style="left:351px;top:379px;width:1539px;height:420px;border:1px solid #ccc;border-bottom:0"></div>
<div class="a" style="left:352px;top:380px;width:1537px;height:36px;background:#f5f7fb"></div>
<div class="a" style="left:352px;top:416px;width:1537px;height:2px;background:#c6c6c6"></div>
<div class="a" style="left:352px;top:418px;width:33px;height:33px;background:#f5f7fb;border-bottom:1px solid #e98a4c"></div>
<div class="a" style="left:385px;top:418px;width:1504px;height:34px;background:#4f7cc8;border-bottom:2px solid #e98a4c"></div>
<div class="vl" style="left:385px"></div><div class="vl" style="left:416px"></div><div class="vl" style="left:453px"></div><div class="vl" style="left:676px"></div><div class="vl" style="left:1014px"></div><div class="vl" style="left:1126px"></div><div class="vl" style="left:1189px"></div><div class="vl" style="left:1314px"></div><div class="vl" style="left:1539px"></div><div class="vl" style="left:1614px"></div><div class="vl" style="left:1758px"></div><div class="vl" style="left:1864px"></div>
<div class="ol" style="left:385px"></div><div class="ol" style="left:416px;width:1px"></div><div class="ol" style="left:453px;width:1px"></div><div class="ol" style="left:676px;width:1px"></div><div class="ol" style="left:1014px;width:1px"></div><div class="ol" style="left:1126px;width:1px"></div><div class="ol" style="left:1189px;width:1px"></div><div class="ol" style="left:1314px;width:1px"></div><div class="ol" style="left:1539px"></div><div class="ol" style="left:1614px"></div><div class="ol" style="left:1758px"></div><div class="ol" style="left:1864px"></div>
<div class="th" style="left:457px">医嘱时间</div><div class="th" style="left:681px">医嘱内容</div><div class="th" style="left:1018px">频率用法</div><div class="th" style="left:1131px">总量</div><div class="th" style="left:1194px">嘱咐</div><div class="th" style="left:1319px;font-size:16.500px">录入医师/提交医师/核对护士</div><div class="th" style="left:1544px">执行状态</div><div class="th" style="left:1619px">核对日期时间</div><div class="th" style="left:1762px">停嘱时间</div><div class="th" style="left:1869px;width:20px;overflow:hidden">停嘱</div>
<div class="tv" style="left:427px">临</div>
<div class="tv" style="left:457px;letter-spacing:.25px">20250915 11:44:00</div>
<div class="tv" style="left:681px">术前导尿(描述)</div>
<div class="tv" style="left:1319px;letter-spacing:.4px">张李宝/张李宝/张雅婷</div>
<div class="tv" style="left:1544px">已执行</div>
<div class="tv" style="left:1619px;width:138px;letter-spacing:.25px">20250915 11:47:55</div>
<div class="tv" style="left:1762px;width:101px;letter-spacing:.25px">250915 11:48</div>
<div class="tv" style="left:1869px;width:20px">张李</div>

<!-- scrollbar + collapse -->
<div class="a" style="left:352px;top:778px;width:911px;height:20px;background:#bdbebf;border-radius:0 5px 5px 0"></div>
<div class="a" style="left:1083px;top:784px;width:75px;height:15px;background:#4f7cc8;border-radius:9px 9px 0 0"></div>
<div class="a" style="left:1116px;top:789px;border:5px solid transparent;border-top:6px solid #fff;border-bottom:0"></div>
<div class="a" style="left:351px;top:798px;width:1539px;height:2px;background:#4f7cc8"></div>

<!-- bottom panel -->
<div class="a" style="left:351px;top:838px;width:84px;height:140px;background:#f5f7fb;border-top:1px solid #d8dde8;border-right:1px solid #e0e3ea"></div>
<div class="t" style="left:359px;top:808px;color:#5d82c9;font-size:17px;letter-spacing:.3px">费用明细</div>
<div class="a" style="left:443px;top:800px;width:1445px;height:37px;background:#f5f7fb;border-bottom:1px solid #ccc"></div>
<div class="a" style="left:443px;top:837px;width:1445px;height:35px;background:#fef0c7;border-bottom:1px solid #ccc"></div>
<div class="bh" style="left:446px">状态</div><div class="bh" style="left:547px">日期</div><div class="bh" style="left:721px">名称</div><div class="bh" style="left:1034px">数量</div><div class="bh" style="left:1122px">单位</div><div class="bh" style="left:1211px">金额</div><div class="bh" style="left:1277px">用药日期</div><div class="bh" style="left:1378px">医嘱ID</div><div class="bh" style="left:1477px">执行科室</div>
<div class="bv" style="left:447px">已收费</div><div class="bv" style="left:547px">20250915 11:48:12</div><div class="bv" style="left:721px">检验收费项目价格为0（免费）</div><div class="bv" style="left:1034px">1</div><div class="bv" style="left:1122px">个</div><div class="bv b" style="left:1229px;width:35px;text-align:right">0.00</div><div class="bv" style="left:1378px">133146627</div><div class="bv" style="left:1478px">骨科(骨脊柱专科)</div>
<div class="a" style="left:351px;top:978px;width:1539px;height:1px;background:#d8dde8"></div>
<div class="t" style="left:364px;top:984px;font-size:15px">颜色:</div>
<div class="lg" style="left:409px;width:49px;color:#3232f0">新开</div>
<div class="lg" style="left:471px;width:64px;color:#2fae2f">已核对</div>
<div class="lg" style="left:548px;width:64px;color:#555">未扣费</div>
<div class="lg" style="left:625px;width:64px;color:#2a8a9a">已执行</div>
<div class="lg" style="left:702px;width:64px;color:#f2953a">待核停</div>
<div class="lg" style="left:779px;width:49px;color:#f33">停止</div>
<div class="lg" style="left:842px;width:48px;color:#7b1fa2">撤销</div>
<div class="lg" style="left:903px;width:49px;color:#ee88ee">取消</div>
<div class="a" style="left:1840px;top:951px;width:50px;height:50px;background:#4f7cc8;border-radius:50%"></div>
<svg class="a" style="left:1854px;top:965px" width="22" height="22" fill="none" stroke="#fff" stroke-width="2"><path d="M11 2l2.500 2 3.500 0 1 3.500 2 3.500-2 3.500-1 3.500-3.500 0L11 20l-2.500-2-3.500 0-1-3.500-2-3.500 2-3.500L5 4l3.500 0Z"/><circle cx="11" cy="11" r="3"/></svg>

<!-- annotations -->
<div class="red" style="left:453px;top:378px;width:373px;height:94px"></div>
<div class="red" style="left:437px;top:792px;width:1204px;height:102px"></div>
</body></html>
